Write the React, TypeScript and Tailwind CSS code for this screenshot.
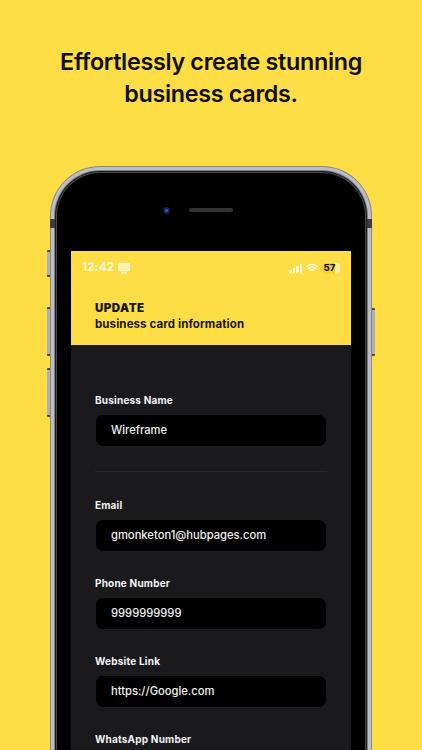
import { Wifi } from "lucide-react";

const fields = [
  { label: "Email", value: "gmonketon1@hubpages.com" },
  { label: "Phone Number", value: "9999999999" },
  { label: "Website Link", value: "https://Google.com" },
];

function Field({ label, value }: { label: string; value: string }) {
  return (
    <div className="flex flex-col">
      <span className="text-[10px] leading-[13px] font-bold tracking-[0.2px] text-[#f4f4f4]">
        {label}
      </span>
      <div className="mt-[7px] flex h-[33px] items-center rounded-[8px] border border-[#1b1b1e] bg-black pl-[15px] text-[11.2px] font-medium text-[#f0f0f0]">
        {value}
      </div>
    </div>
  );
}

function StatusBar() {
  return (
    <div className="flex h-[18px] items-center justify-between px-[11px] text-[#fff8dc]">
      <div className="flex items-center gap-[3px]">
        <span className="text-[11.5px] font-bold tracking-[0.3px]">12:42</span>
        <svg width="12" height="11" viewBox="0 0 12 11" fill="#fff0a8" stroke="currentColor">
          <rect x="0.75" y="0.75" width="10.5" height="6.75" rx="1.5" strokeWidth="1.5" />
          <path d="M3.5 9.75h5" strokeWidth="1.5" strokeLinecap="round" />
        </svg>
      </div>
      <div className="flex items-center gap-[4px]">
        <div className="flex items-end gap-[1px]">
          <div className="h-[3px] w-[2.5px] rounded-[0.5px] bg-[#fff8dc]" />
          <div className="h-[5px] w-[2.5px] rounded-[0.5px] bg-[#fff8dc]" />
          <div className="h-[7px] w-[2.5px] rounded-[0.5px] bg-[#fff8dc]" />
          <div className="h-[9px] w-[2.5px] rounded-[0.5px] bg-[#fff8dc]" />
        </div>
        <Wifi size={12} strokeWidth={3} />
        <div className="flex h-[11px] w-[18px] items-center overflow-hidden rounded-[3px] bg-[#ffee9e]">
          <div className="flex h-full w-[13px] items-center justify-center bg-[#f5d22e] pl-[2px] text-[9.5px] font-extrabold text-[#111]">
            57
          </div>
        </div>
      </div>
    </div>
  );
}

function SideButton({ className }: { className: string }) {
  return (
    <div className={`absolute w-[3px] border-y-2 border-[#4a4a4d] bg-[#aeb0b6] ${className}`} />
  );
}

export default function App() {
  return (
    <div
      className="flex h-[750px] w-[422px] flex-col items-center overflow-hidden bg-[#ffdd44] text-[#111]"
      style={{ fontFamily: "Inter, 'Liberation Sans', sans-serif" }}
    >
      <h1 className="mt-[46px] text-center text-[23.3px] leading-[32px] font-semibold tracking-[-0.3px] text-[#0e0e0c]">
        Effortlessly create stunning
        <br />
        business cards.
      </h1>

      <div className="relative mt-[56px] w-[322px] flex-1">
        {/* side buttons */}
        <SideButton className="top-[84px] -left-[3px] h-[27px] rounded-l-[1px]" />
        <SideButton className="top-[141px] -left-[3px] h-[49px] rounded-l-[1px]" />
        <SideButton className="top-[202px] -left-[3px] h-[49px] rounded-l-[1px]" />
        <SideButton className="top-[142px] -right-[3px] h-[48px] rounded-r-[1px]" />
        {/* antenna bands */}
        <div className="absolute top-[53px] left-0 z-10 h-[9px] w-[5px] bg-[#3c3c3e]" />
        <div className="absolute top-[53px] right-0 z-10 h-[9px] w-[5px] bg-[#3c3c3e]" />

        {/* metal frame */}
        <div className="h-full rounded-t-[50px] bg-[#85878c] px-px pt-px">
          <div className="h-full rounded-t-[49px] bg-[#bdbfc5] px-[3px] pt-[3px]">
            <div className="h-full rounded-t-[46px] bg-[#7d7f84] px-px pt-px">
              <div className="h-full rounded-t-[45px] bg-[#1c1c1e] px-[1px] pt-[1px]">
                <div className="flex h-full flex-col rounded-t-[44px] border-x border-t border-[#4a4a4e] bg-black px-[14px]">
                  <div className="relative flex h-[78px] items-center justify-center pb-[5px]">
                    <div className="absolute top-[34px] left-[92px] flex h-[7px] w-[7px] items-center justify-center rounded-full bg-[#14204f]">
                      <div className="h-[3px] w-[3px] rounded-full bg-[#3f5fb0]" />
                    </div>
                    <div className="h-[4px] w-[44px] rounded-full bg-[#333336]" />
                  </div>

                  <div className="flex-1 bg-[#1a1a1d]">
                    <div className="flex h-[94px] flex-col bg-[#ffdd44] pt-[8px]">
                      <StatusBar />
                      <div className="mt-[23px] pl-[24px] text-[#16160f]">
                        <p className="text-[11.5px] leading-[16px] font-black tracking-[0.5px]">UPDATE</p>
                        <p className="text-[11.5px] leading-[16px] font-bold tracking-[0.1px]">
                          business card information
                        </p>
                      </div>
                    </div>

                    <div className="flex flex-col px-[24px] pt-[49px]">
                      <Field label="Business Name" value="Wireframe" />
                      <div className="mt-[24px] mb-[27px] h-px bg-[#29292b]" />
                      <div className="flex flex-col gap-[25px]">
                        {fields.map((f) => (
                          <Field key={f.label} label={f.label} value={f.value} />
                        ))}
                        <span className="text-[10px] leading-[13px] font-bold tracking-[0.2px] text-[#f4f4f4]">
                          WhatsApp Number
                        </span>
                      </div>
                    </div>
                  </div>
                </div>
              </div>
            </div>
          </div>
        </div>
      </div>
    </div>
  );
}
